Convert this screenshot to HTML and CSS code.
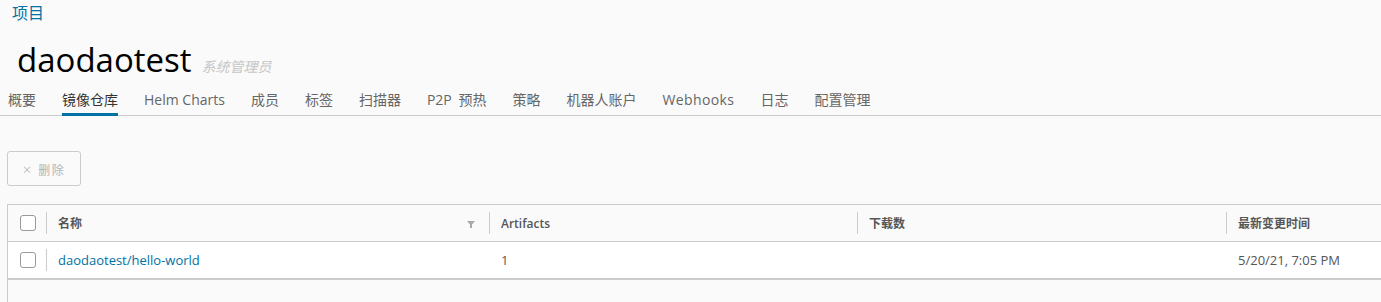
FILE: index.html
```html
<!DOCTYPE html>
<html lang="zh-CN">
<head>
    <meta charset="UTF-8">
    <meta name="viewport" content="width=device-width, initial-scale=1.0">
    <title>daodaotest - 镜像仓库</title>
    <link rel="stylesheet" href="styles.css">
</head>
<body>
    <div class="breadcrumb"><a href="#">项目</a></div>
    <div class="title">
        <h1>daodaotest</h1>
        <span class="role">系统管理员</span>
    </div>
    <ul class="tabs">
        <li>概要</li>
        <li class="active">镜像仓库</li>
        <li>Helm Charts</li>
        <li>成员</li>
        <li>标签</li>
        <li>扫描器</li>
        <li class="p2p">P2P 预热</li>
        <li>策略</li>
        <li>机器人账户</li>
        <li class="en">Webhooks</li>
        <li>日志</li>
        <li>配置管理</li>
    </ul>

    <div class="toolbar">
        <button class="btn" disabled><span class="x">×</span> 删除</button>
    </div>

    <div class="datagrid">
        <div class="row head">
            <div class="cell check"><span class="box"></span></div>
            <div class="cell">名称
                <svg class="filter" width="8" height="7" viewBox="0 0 8 7"><path d="M0 0H8L5 3.5V7H3V3.5Z" fill="#a9a9a9"/></svg>
            </div>
            <div class="cell">Artifacts</div>
            <div class="cell">下载数</div>
            <div class="cell">最新变更时间</div>
        </div>
        <div class="row body">
            <div class="cell check"><span class="box"></span></div>
            <div class="cell"><a href="#">daodaotest/hello-world</a></div>
            <div class="cell">1</div>
            <div class="cell"></div>
            <div class="cell">5/20/21, 7:05 PM</div>
        </div>
        <div class="footer"></div>
    </div>
</body>
</html>
```

FILE: styles.css
```css
body {
    margin: 0;
    background-color: #fafafa;
    font-family: "Open Sans", "Noto Sans CJK SC", sans-serif;
    color: #565656;
    overflow: hidden;
}

a {
    color: #0072a3;
    text-decoration: none;
}

.breadcrumb {
    padding: 1px 0 0 12px;
    height: 25px;
    font-size: 16px;
    line-height: 24px;
}

.title {
    display: flex;
    align-items: baseline;
    padding-left: 17px;
    height: 60px;
}

.title h1 {
    margin: 4px 0 0;
    font-size: 33px;
    font-weight: 400;
    color: #000;
    line-height: 60px;
}

.title .role {
    margin-left: 10px;
    font-size: 14px;
    font-style: italic;
    color: #c6c6c6;
}

.tabs {
    display: flex;
    gap: 26px;
    margin: 0;
    padding: 0 0 0 8px;
    list-style: none;
    border-bottom: 1px solid #ccc;
}

.tabs li {
    font-size: 14px;
    color: #666;
    height: 30px;
    line-height: 27px;
    border-bottom: 3px solid transparent;
    box-sizing: border-box;
    margin-bottom: -1px;
}

.tabs li.active {
    color: #333;
    border-bottom-color: #0072a3;
}

.tabs li.p2p {
    word-spacing: 3px;
}

.tabs li.en {
    letter-spacing: 0.4px;
}

.toolbar {
    padding: 35px 0 0 7px;
}

.btn {
    width: 74px;
    height: 35px;
    border: 1px solid #ccc;
    border-radius: 3px;
    background: transparent;
    color: #b3b3b3;
    font-family: inherit;
    font-size: 12px;
    letter-spacing: 1.5px;
    padding: 0;
}

.btn .x {
    font-size: 15px;
    font-weight: 300;
    margin-right: 1px;
}

.datagrid {
    margin: 18px 0 0 7px;
    border: 1px solid #ccc;
    border-right: none;
    border-bottom: none;
}

.row {
    display: grid;
    grid-template-columns: 38px 443px 368px 369px 1fr;
    height: 36px;
    align-items: center;
}

.row.head {
    background-color: #fafafa;
    border-bottom: 1px solid #ccc;
    font-size: 12px;
    font-weight: 600;
    color: #565656;
}

.row.body {
    background-color: #fff;
    border-bottom: 2px solid #ccc;
    font-size: 13px;
}

.cell {
    position: relative;
    padding-left: 12px;
    display: flex;
    align-items: center;
    height: 100%;
}

.row.head .cell + .cell::before,
.row.body .cell:nth-child(2)::before {
    content: "";
    position: absolute;
    left: 0;
    top: 7px;
    bottom: 7px;
    border-left: 1px solid #ccc;
}

.box {
    width: 14px;
    height: 14px;
    border: 1px solid #999;
    border-radius: 3px;
    background: #fff;
}

.filter {
    position: absolute;
    right: 14px;
    top: 16px;
}

.footer {
    height: 30px;
}
```
